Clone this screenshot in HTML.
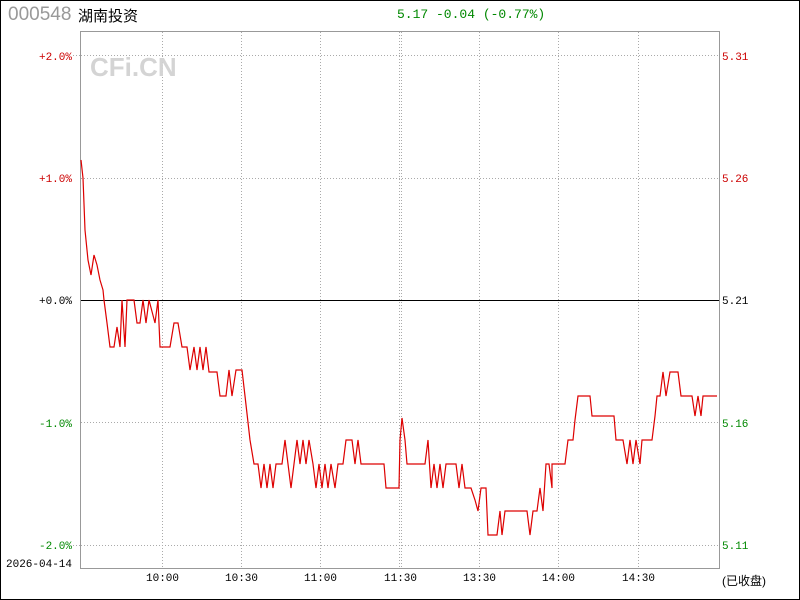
<!DOCTYPE html><html><head><style>
body{margin:0;width:800px;height:600px;overflow:hidden;background:#fff;font-family:"Liberation Mono","Noto Sans CJK SC",monospace}
.t{position:absolute;font-size:11px;white-space:nowrap}
</style></head><body>
<div style="position:absolute;left:0;top:0;width:798px;height:598px;border:1px solid #000"></div>
<div class="t" style="left:8px;top:4px;font-size:19px;color:#999;font-family:'Liberation Sans',sans-serif">000548</div>
<div class="t" style="left:78px;top:5px;font-size:15px;color:#000;font-family:'Liberation Sans','Noto Sans CJK SC',sans-serif">湖南投资</div>
<div class="t" style="left:397px;top:7px;font-size:13px;color:#080">5.17 -0.04 (-0.77%)</div>
<svg style="position:absolute;left:0;top:0" width="800" height="600">
<g stroke="#aaa" stroke-dasharray="1,2" stroke-width="1">
<line x1="81" y1="55.5" x2="719" y2="55.5"/><line x1="81" y1="178.5" x2="719" y2="178.5"/><line x1="81" y1="422.5" x2="719" y2="422.5"/><line x1="81" y1="545.5" x2="719" y2="545.5"/><line x1="73" y1="55.5" x2="81" y2="55.5"/><line x1="73" y1="545.5" x2="81" y2="545.5"/>
<line x1="162.5" y1="32" x2="162.5" y2="568"/><line x1="241.5" y1="32" x2="241.5" y2="568"/><line x1="320.5" y1="32" x2="320.5" y2="568"/><line x1="399.5" y1="32" x2="399.5" y2="568"/><line x1="401.5" y1="32" x2="401.5" y2="568"/><line x1="479.5" y1="32" x2="479.5" y2="568"/><line x1="558.5" y1="32" x2="558.5" y2="568"/><line x1="638.5" y1="32" x2="638.5" y2="568"/>
</g>
<line x1="81" y1="300.5" x2="719" y2="300.5" stroke="#000"/>
<rect x="80.5" y="31.5" width="639" height="537" fill="none" stroke="#999"/>
<text x="90" y="76" font-family="Liberation Sans" font-weight="bold" font-size="26" fill="#d4d4d4">CFi.CN</text>
<polyline fill="none" stroke="#d00" stroke-width="1.2" points="81,160 83,178 85,230 88,260 91,275 94,255 97,265 100,280 103,290 104,300 107,323 110,347 114,347 117,327 120,347 122,300 125,347 127,300 134,300 137,323 140,323 143,300 146,323 149,300 155,323 158,300 160,347 170,347 174,323 178,323 182,347 187,347 190,370 194,347 197,370 200,347 203,370 206,347 209,372 217,372 220,396 226,396 229,370 232,396 236,370 242,370 245,396 250,440 254,464 258,464 261,488 264,464 267,488 270,464 273,488 276,464 282,464 285,440 288,464 291,488 294,464 297,440 300,464 303,440 306,464 309,440 313,464 316,488 319,464 322,488 325,464 328,488 331,464 335,488 338,464 343,464 346,440 352,440 355,464 358,440 361,464 384,464 386,488 399,488 400,440 402,418 405,440 407,464 425,464 428,440 431,488 434,464 437,488 440,464 443,488 446,464 456,464 459,488 462,464 465,488 471,488 475,500 478,511 481,488 486,488 488,535 497,535 500,511 502,535 505,511 527,511 530,535 533,511 537,511 540,488 543,511 546,464 549,464 552,488 552,464 565,464 568,440 573,440 575,420 578,396 590,396 592,416 614,416 616,440 623,440 627,464 630,440 633,464 636,440 640,464 642,440 652,440 655,416 657,396 660,396 663,372 666,396 670,372 678,372 681,396 692,396 695,416 698,396 701,416 703,396 717,396"/>
</svg>
<div class="t" style="right:728px;top:52px;color:#c00">+2.0%</div>
<div class="t" style="right:728px;top:174px;color:#c00">+1.0%</div>
<div class="t" style="right:728px;top:296px;color:#000">+0.0%</div>
<div class="t" style="right:728px;top:419px;color:#080">-1.0%</div>
<div class="t" style="right:728px;top:541px;color:#080">-2.0%</div>
<div class="t" style="left:722px;top:52px;color:#c00">5.31</div>
<div class="t" style="left:722px;top:174px;color:#c00">5.26</div>
<div class="t" style="left:722px;top:296px;color:#000">5.21</div>
<div class="t" style="left:722px;top:419px;color:#080">5.16</div>
<div class="t" style="left:722px;top:541px;color:#080">5.11</div>
<div class="t" style="left:6px;top:559px;color:#000">2026-04-14</div>
<div class="t" style="left:146px;top:573px">10:00</div>
<div class="t" style="left:225px;top:573px">10:30</div>
<div class="t" style="left:304px;top:573px">11:00</div>
<div class="t" style="left:384px;top:573px">11:30</div>
<div class="t" style="left:463px;top:573px">13:30</div>
<div class="t" style="left:542px;top:573px">14:00</div>
<div class="t" style="left:622px;top:573px">14:30</div>
<div class="t" style="left:722px;top:572px;font-family:'Liberation Sans','Noto Sans CJK SC',sans-serif;font-size:12px">(已收盘)</div>
</body></html>
